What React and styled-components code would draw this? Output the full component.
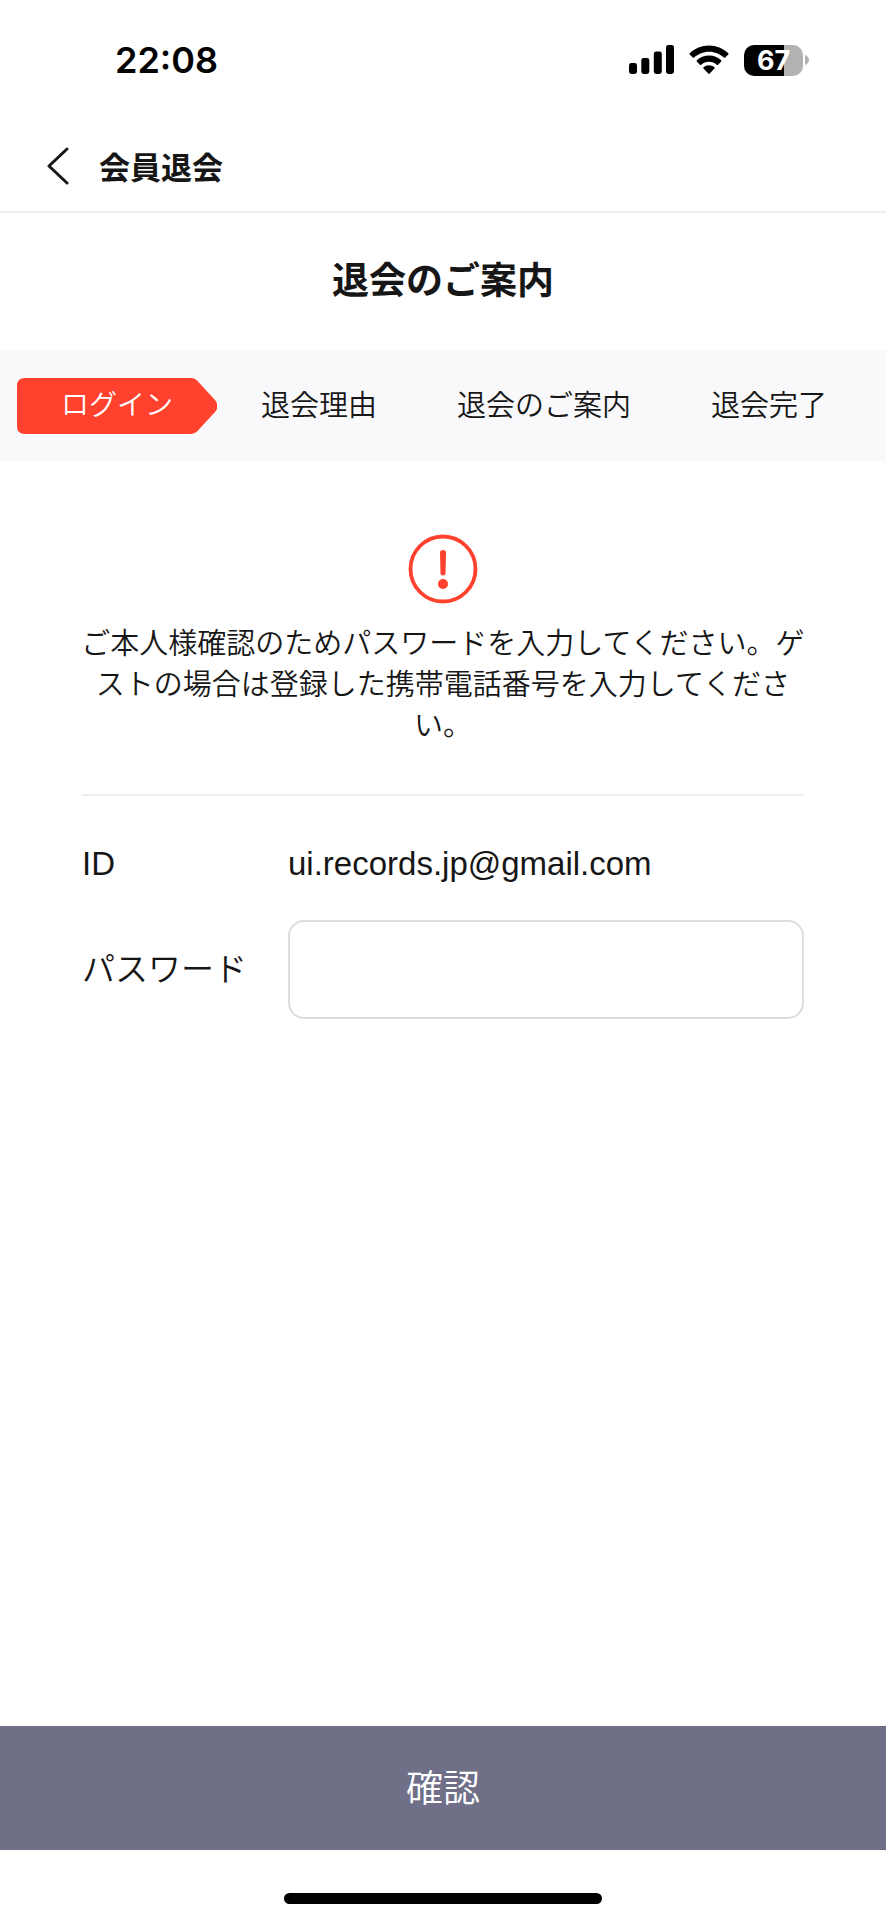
import { useState } from 'react';
import styled, { createGlobalStyle } from 'styled-components';

const STEPS = ['ログイン', '退会理由', '退会のご案内', '退会完了'];

function StatusBar() {
  return (
    <Styled.StatusBar>
      <Styled.Time>22:08</Styled.Time>
      <Styled.StatusIcons>
        <svg width="45" height="30" viewBox="0 0 45 30" aria-hidden="true">
          <rect x="0" y="18" width="8" height="11" rx="2.4" />
          <rect x="12.3" y="13" width="8" height="16" rx="2.4" />
          <rect x="24.8" y="6.5" width="8" height="22.5" rx="2.4" />
          <rect x="37" y="0" width="8" height="29" rx="2.4" />
        </svg>
        <svg width="40" height="30" viewBox="0 0 40 30" aria-hidden="true">
          <path d="M20 0.5C27.4 0.5 34.2 3.4 39.3 8.2C39.7 8.6 39.7 9.1 39.3 9.5L36.2 12.6C35.8 13 35.3 13 34.9 12.6C31 9 25.7 6.7 20 6.7S9 9 5.1 12.6C4.7 13 4.2 13 3.8 12.6L0.7 9.5C0.3 9.1 0.3 8.6 0.7 8.2C5.8 3.4 12.6 0.5 20 0.5Z" />
          <path d="M20 10.6C24.7 10.6 29 12.4 32.2 15.3C32.6 15.7 32.6 16.2 32.2 16.6L29.1 19.7C28.7 20.1 28.2 20.1 27.8 19.7C25.7 17.9 23 16.8 20 16.8S14.3 17.9 12.2 19.7C11.8 20.1 11.3 20.1 10.9 19.7L7.8 16.6C7.4 16.2 7.4 15.7 7.8 15.3C11 12.4 15.3 10.6 20 10.6Z" />
          <path d="M20 20.3C22.1 20.3 24 21.1 25.5 22.3C25.9 22.7 25.9 23.2 25.5 23.6L20.7 28.6C20.3 29 19.7 29 19.3 28.6L14.5 23.6C14.1 23.2 14.1 22.7 14.5 22.3C16 21.1 17.9 20.3 20 20.3Z" />
        </svg>
        <Styled.Battery>
          <Styled.BatteryBody>67</Styled.BatteryBody>
          <svg width="4" height="10" viewBox="0 0 4 10" aria-hidden="true">
            <path d="M0 0C2.4 0.8 4 2.7 4 5S2.4 9.2 0 10Z" fill="#b2b2b2" />
          </svg>
        </Styled.Battery>
      </Styled.StatusIcons>
    </Styled.StatusBar>
  );
}

function Step({ label, active }) {
  return (
    <Styled.Step $active={active} aria-current={active ? 'step' : undefined}>
      {active && (
        <Styled.StepArrow viewBox="0 0 200 56" preserveAspectRatio="none" aria-hidden="true">
          <path
            d="M8 0H174Q177.500 0 180 2.400L198 22Q203 28 198 34L180 53.600Q177.500 56 174 56H8Q0 56 0 48V8Q0 0 8 0Z"
            fill="#ff412e"
          />
        </Styled.StepArrow>
      )}
      <Styled.StepLabel>{label}</Styled.StepLabel>
    </Styled.Step>
  );
}

function App() {
  const [password, setPassword] = useState('');

  return (
    <Styled.Page>
      <GlobalStyle />
      <StatusBar />
      <Styled.Header>
        <Styled.BackButton type="button" aria-label="戻る">
          <svg width="22" height="38" viewBox="0 0 22 38" fill="none" aria-hidden="true">
            <path
              d="M20 2L2 19L20 36"
              stroke="#161616"
              strokeWidth="3"
              strokeLinecap="round"
              strokeLinejoin="round"
            />
          </svg>
        </Styled.BackButton>
        <Styled.HeaderTitle>会員退会</Styled.HeaderTitle>
      </Styled.Header>
      <Styled.Title>退会のご案内</Styled.Title>
      <Styled.Steps>
        {STEPS.map((label, index) => (
          <Step key={label} label={label} active={index === 0} />
        ))}
      </Styled.Steps>
      <Styled.Notice>
        <svg width="70" height="70" viewBox="0 0 70 70" aria-hidden="true">
          <circle cx="35" cy="35" r="32.5" fill="none" stroke="#ff412e" strokeWidth="3.8" />
          <path
            d="M32 18.500Q32 16 35 16T38 18.500L37.500 39.500Q37.400 41.500 35 41.500T32.500 39.500Z"
            fill="#ff412e"
          />
          <circle cx="35" cy="50" r="5" fill="#ff412e" />
        </svg>
        <Styled.NoticeText>
          ご本人様確認のためパスワードを入力してください。ゲストの場合は登録した携帯電話番号を入力してください。
        </Styled.NoticeText>
      </Styled.Notice>
      <Styled.Form id="withdraw-form" onSubmit={(e) => e.preventDefault()}>
        <Styled.Row>
          <Styled.Label as="span">ID</Styled.Label>
          <Styled.Value>ui.records.jp@gmail.com</Styled.Value>
        </Styled.Row>
        <Styled.Row>
          <Styled.Label htmlFor="password">パスワード</Styled.Label>
          <Styled.Input
            id="password"
            type="password"
            value={password}
            onChange={(e) => setPassword(e.target.value)}
          />
        </Styled.Row>
      </Styled.Form>
      <Styled.SubmitButton type="submit" form="withdraw-form">
        確認
      </Styled.SubmitButton>
      <Styled.HomeArea>
        <Styled.HomeIndicator />
      </Styled.HomeArea>
    </Styled.Page>
  );
}

const GlobalStyle = createGlobalStyle`
  * {
    box-sizing: border-box;
  }

  body {
    margin: 0;
    background: #fff;
    color: #161616;
    font-family: 'Noto Sans CJK JP', sans-serif;
    font-weight: 350;
  }

  svg {
    display: block;
    flex: none;
  }
`;

const Styled = {
  Page: styled.main`
    display: flex;
    flex-direction: column;
    min-height: 100vh;
  `,
  StatusBar: styled.div`
    display: flex;
    align-items: center;
    justify-content: space-between;
    height: 120px;
    padding: 0 77px 0 115px;
    color: #000;
    font-family: Inter, sans-serif;
  `,
  Time: styled.span`
    font-size: 36px;
    font-weight: 600;
    line-height: 40px;
  `,
  StatusIcons: styled.div`
    display: flex;
    align-items: center;
    gap: 15px;
  `,
  Battery: styled.div`
    display: flex;
    align-items: center;
    gap: 2px;
  `,
  BatteryBody: styled.div`
    width: 59px;
    border-radius: 10px;
    background: linear-gradient(to right, #000 68%, #b2b2b2 68%);
    color: #fff;
    font-size: 27px;
    font-weight: 700;
    line-height: 31px;
    text-align: center;
  `,
  Header: styled.header`
    display: flex;
    align-items: center;
    gap: 30px;
    height: 93px;
    padding: 0 47px;
    border-bottom: 2px solid #eee;
  `,
  BackButton: styled.button`
    padding: 0;
    border: 0;
    background: none;
    cursor: pointer;
  `,
  HeaderTitle: styled.span`
    font-size: 31px;
    font-weight: 700;
    line-height: 40px;
  `,
  Title: styled.h1`
    margin: 0;
    padding: 40px 0 47px;
    font-size: 37px;
    font-weight: 700;
    line-height: 50px;
    text-align: center;
  `,
  Steps: styled.ol`
    display: flex;
    align-items: center;
    margin: 0;
    padding: 28px 17px 27px;
    background: #f9f9fb;
    list-style: none;
  `,
  Step: styled.li`
    position: relative;
    margin-right: ${({ $active }) => ($active ? '4px' : '0')};
    padding: 0 ${({ $active }) => ($active ? '44px' : '40px')};
    color: ${({ $active }) => ($active ? '#fff' : '#161616')};
    font-family: 'Liberation Sans', 'Noto Sans CJK JP', sans-serif;
    font-size: ${({ $active }) => ($active ? '28px' : '29px')};
    line-height: 56px;
    white-space: nowrap;
  `,
  StepArrow: styled.svg`
    position: absolute;
    inset: 0;
    width: 100%;
    height: 100%;
  `,
  StepLabel: styled.span`
    position: relative;
  `,
  Notice: styled.section`
    display: flex;
    flex-direction: column;
    align-items: center;
    gap: 17px;
    padding: 73px 80px 50px;
  `,
  NoticeText: styled.p`
    margin: 0;
    font-size: 29px;
    line-height: 41px;
    text-align: center;
  `,
  Form: styled.form`
    display: flex;
    flex-direction: column;
    gap: 36px;
    margin: 0 82px;
    padding: 48px 0;
    border-top: 2px solid #eee;
  `,
  Row: styled.div`
    display: flex;
    align-items: center;
  `,
  Label: styled.label`
    flex: none;
    width: 206px;
    font-family: 'Liberation Sans', 'Noto Sans CJK JP', sans-serif;
    font-size: 33px;
    line-height: 40px;
  `,
  Value: styled.span`
    font-family: 'Liberation Sans', sans-serif;
    font-size: 33px;
    line-height: 40px;
  `,
  Input: styled.input`
    flex: 1;
    min-width: 0;
    height: 99px;
    padding: 0 24px;
    border: 2px solid #dcdcdc;
    border-radius: 16px;
    background: #fff;
    color: inherit;
    font: inherit;
    font-size: 33px;
    outline: none;
  `,
  SubmitButton: styled.button`
    margin-top: auto;
    padding: 30px 0 34px;
    border: 0;
    background: #6f7088;
    color: #fff;
    font-family: inherit;
    font-size: 37px;
    font-weight: 350;
    line-height: 60px;
    cursor: pointer;
  `,
  HomeArea: styled.div`
    display: flex;
    justify-content: center;
    padding: 43px 0 16px;
  `,
  HomeIndicator: styled.div`
    width: 318px;
    height: 11px;
    border-radius: 6px;
    background: #000;
  `,
};

export default App;
